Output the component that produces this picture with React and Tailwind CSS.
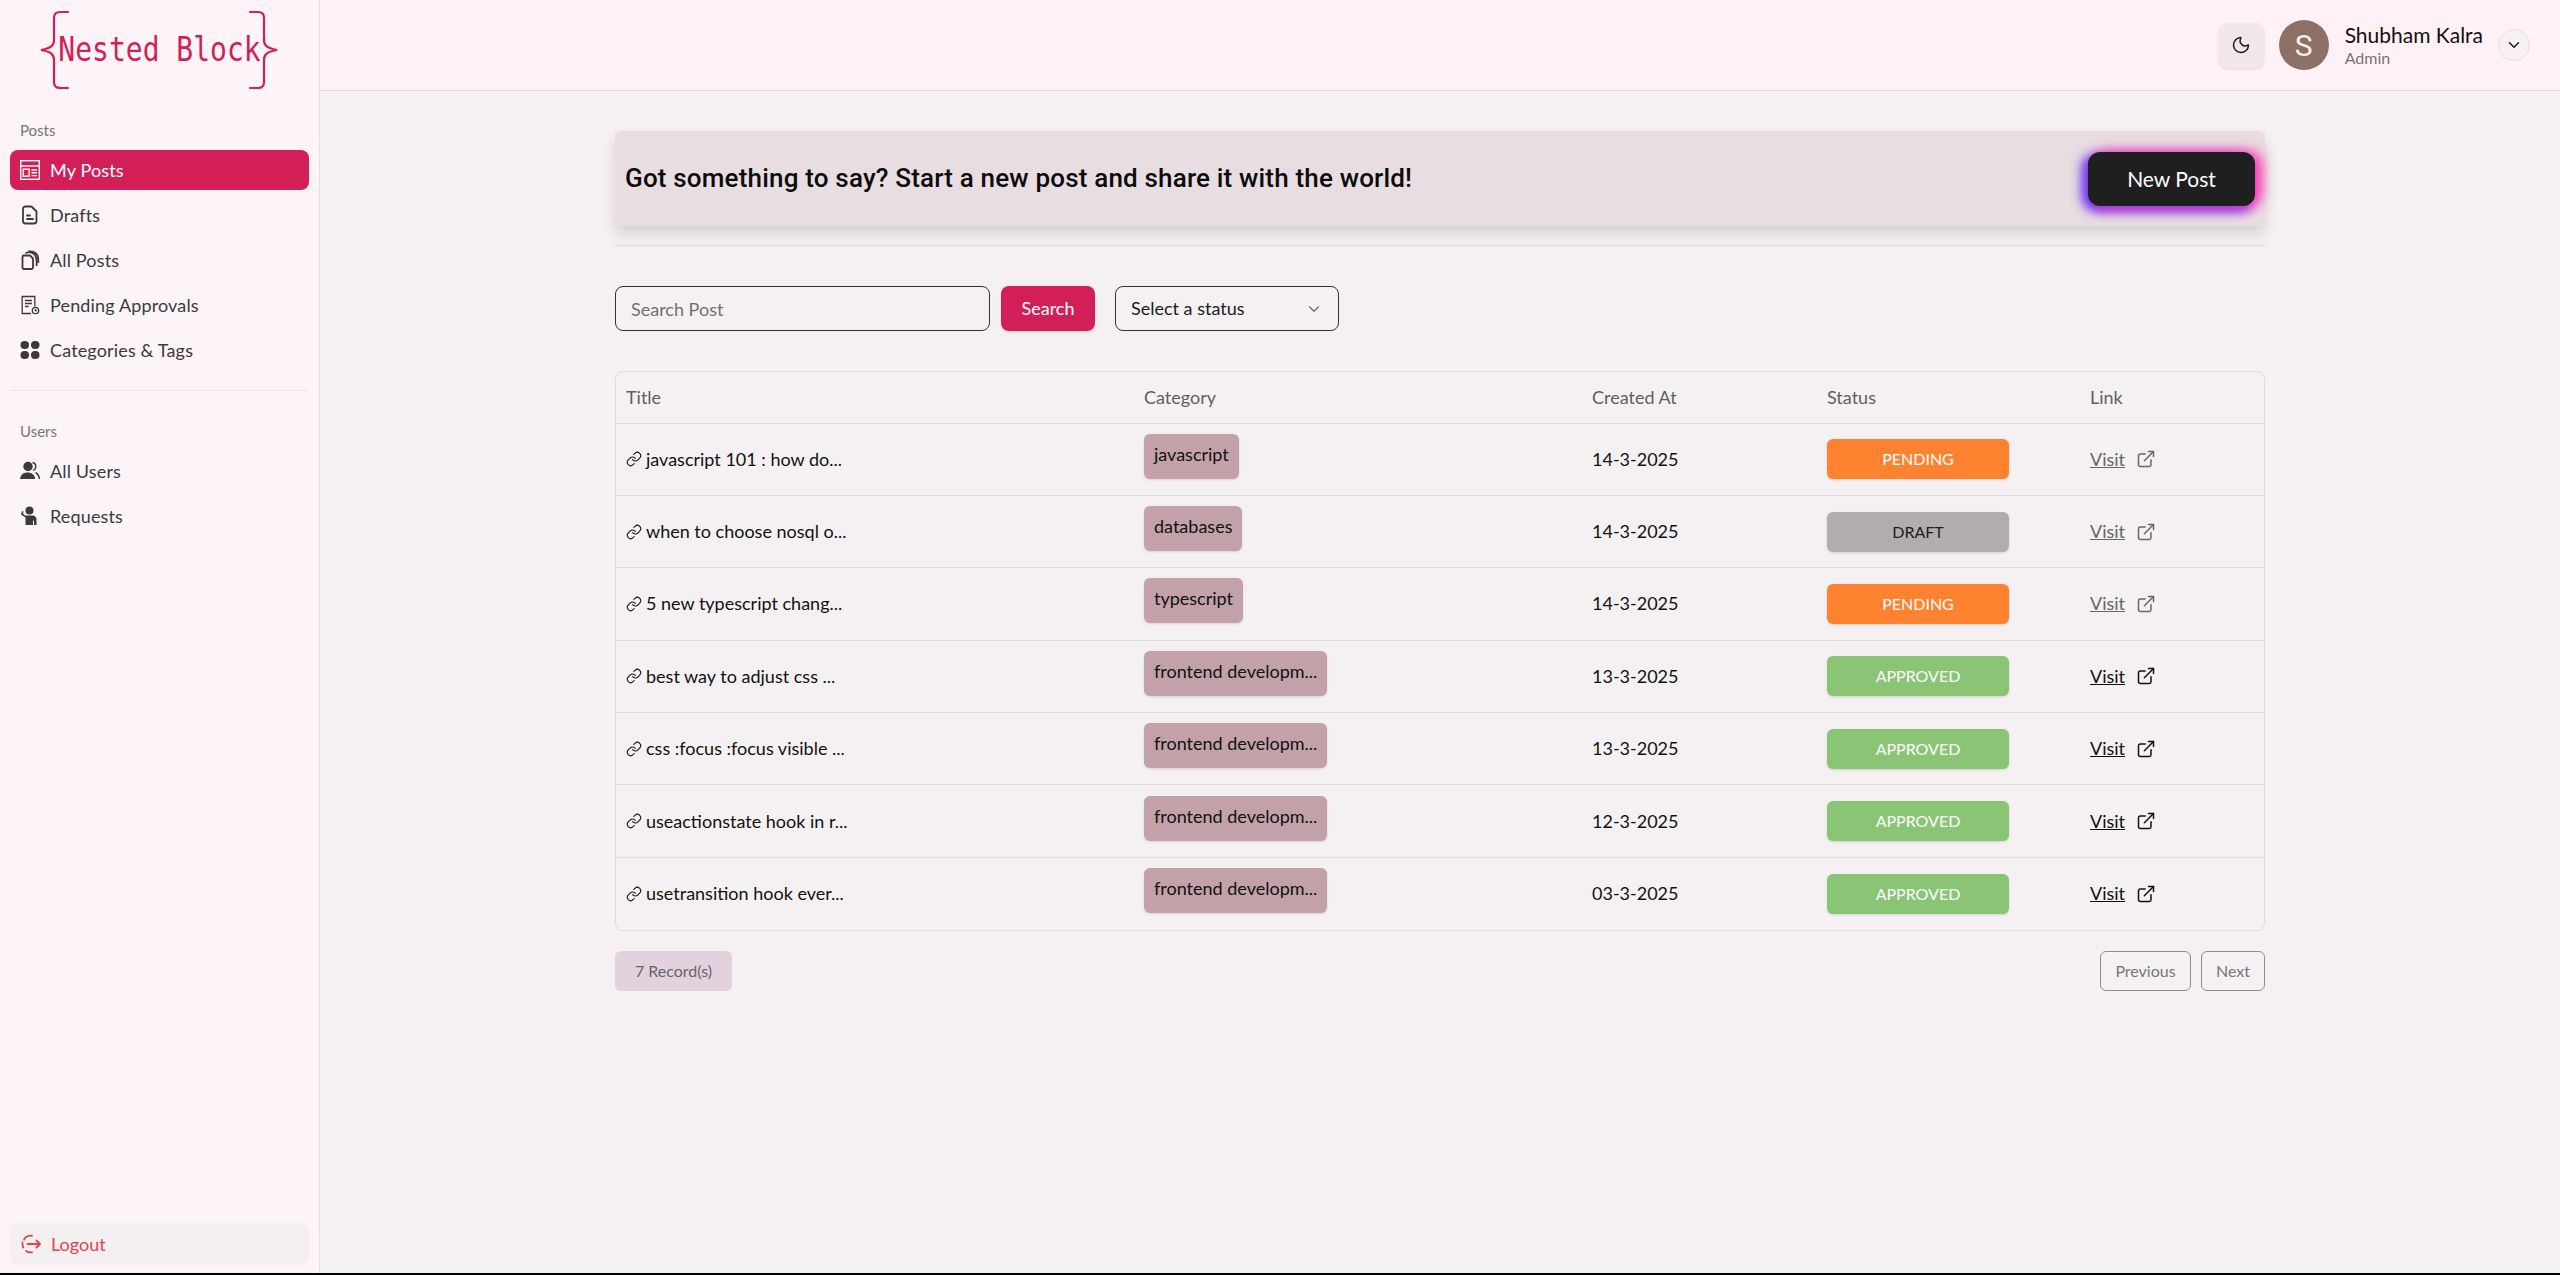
import React from "react";
import { Moon, ChevronDown, Link as LinkIcon, ExternalLink } from "lucide-react";

const posts = [
  { title: "javascript 101 : how do...", category: "javascript", date: "14-3-2025", status: "PENDING" },
  { title: "when to choose nosql o...", category: "databases", date: "14-3-2025", status: "DRAFT" },
  { title: "5 new typescript chang...", category: "typescript", date: "14-3-2025", status: "PENDING" },
  { title: "best way to adjust css ...", category: "frontend developm...", date: "13-3-2025", status: "APPROVED" },
  { title: "css :focus :focus visible ...", category: "frontend developm...", date: "13-3-2025", status: "APPROVED" },
  { title: "useactionstate hook in r...", category: "frontend developm...", date: "12-3-2025", status: "APPROVED" },
  { title: "usetransition hook ever...", category: "frontend developm...", date: "03-3-2025", status: "APPROVED" },
];

const statusStyles = {
  PENDING: "bg-[#fd8330] text-white",
  DRAFT: "bg-[#b1adae] text-[#1c1c1c]",
  APPROVED: "bg-[#8ac576] text-white",
};

const MyPostsIcon = () => (
  <svg width="20" height="20" viewBox="0 0 20 20" fill="none" stroke="currentColor" strokeWidth="1.4">
    <rect x="0.7" y="0.7" width="18.6" height="18.6" />
    <path d="M1 6h18" />
    <rect x="3.2" y="9.2" width="6" height="7" />
    <path d="M11.5 10h5.5M11.5 12.8h5.5M11.5 15.6h5.5" />
  </svg>
);

const DraftIcon = () => (
  <svg width="20" height="20" viewBox="0 0 20 20" fill="none" stroke="currentColor" strokeWidth="1.8" strokeLinejoin="round" strokeLinecap="round">
    <path d="M5.5 1.5h6l5 5v9.5a2.5 2.5 0 0 1-2.500 2.500h-8.500a2.500 2.500 0 0 1-2.500-2.500v-12a2.500 2.500 0 0 1 2.500-2.500z" />
    <path d="M7 10.500h3M7 14h6" />
  </svg>
);

const AllPostsIcon = () => (
  <svg width="20" height="20" viewBox="0 0 20 20" fill="none" stroke="currentColor" strokeWidth="1.8" strokeLinejoin="round">
    <path d="M4 5.500h6l3 3v9a1.500 1.500 0 0 1-1.500 1.500h-7.500a1.500 1.500 0 0 1-1.500-1.500v-10.500a1.500 1.500 0 0 1 1.500-1.500z" />
    <path d="M5.500 3.200c3-1.500 7-1.200 9.500 1.800 1.500 2 2 5 1.500 11" />
    <path d="M8.500 1.500c3.500-.6 6.500.5 8.500 3 1.300 2 1.500 5 1.200 8.500" />
  </svg>
);

const PendingIcon = () => (
  <svg width="20" height="20" viewBox="0 0 20 20" fill="none" stroke="currentColor" strokeWidth="1.3">
    <path d="M11 18.500h-8.800v-17h12.600v10" />
    <path d="M5 5.500h7M5 8.500h7M5 11.500h3.500" />
    <circle cx="15.500" cy="15.500" r="3.200" />
    <path d="M15.500 14v1.700h1.500" />
  </svg>
);

const CategoriesIcon = () => (
  <svg width="20" height="20" viewBox="0 0 20 20" fill="currentColor">
    <rect x="0.500" y="1" width="8.500" height="8" rx="4" />
    <rect x="11" y="1" width="8.500" height="8" rx="4" />
    <rect x="0.500" y="11" width="8.500" height="8" rx="4" />
    <rect x="11" y="11" width="8.500" height="8" rx="4" />
  </svg>
);

const AllUsersIcon = () => (
  <svg width="20" height="20" viewBox="0 0 20 20" fill="currentColor">
    <circle cx="8" cy="5.500" r="4.700" />
    <path d="M0 18c.6-4.500 3.500-6.500 7.500-6.500s7 2 7.800 6.500z" />
    <path d="M12.500 1.500c2.200.5 3.300 2.100 3.300 4 0 1.800-1 3.300-2.800 3.900" fill="none" stroke="currentColor" strokeWidth="1.400" />
    <path d="M15.500 11.500c2 1 3.500 3.200 4 6.500" fill="none" stroke="currentColor" strokeWidth="1.400" />
  </svg>
);

const RequestsIcon = () => (
  <svg width="20" height="20" viewBox="0 0 20 20" fill="currentColor">
    <circle cx="9.500" cy="4.500" r="4" />
    <path d="M5 9.500h7.500c2.500 0 4 1.800 4 4v5.500h-2.500v-4.500h-1v4.500h-7.500v-7.500l-4.500-3 1-3.500 1.500.500-.5 2z" />
  </svg>
);

const LogoutIcon = () => (
  <svg width="20" height="20" viewBox="0 0 20 20" fill="none" stroke="currentColor" strokeWidth="1.800" strokeLinecap="round" strokeLinejoin="round">
    <path d="M11 1.800a8.300 8.300 0 0 0-8 3.700" />
    <path d="M1.500 8.500a8.300 8.300 0 0 0 .800 5" />
    <path d="M5 17a8.300 8.300 0 0 0 6 1.300" />
    <path d="M6.500 10h12.500M15.500 6.500l3.500 3.500-3.500 3.500" />
  </svg>
);

const Logo = () => (
  <div className="relative flex h-[100px] items-center justify-center">
    <svg className="absolute left-[40px] top-[10px]" width="240" height="80" viewBox="0 0 240 80" fill="none" stroke="#d31f58" strokeWidth="2.200" strokeLinecap="round">
      <path d="M28 2h-8c-4 0-6 2-6 6v22c0 5-2 8-13 10 11 2 13 5 13 10v22c0 4 2 6 6 6h8" />
      <path d="M210 2h8c4 0 6 2 6 6v22c0 5 2 8 13 10-11 2-13 5-13 10v22c0 4-2 6-6 6h-8" />
    </svg>
    <span className="scale-y-[1.2] font-['DejaVu_Sans_Mono',monospace] text-[28px] leading-none text-[#d31f58]">
      Nested Block
    </span>
  </div>
);

const NavItem = ({ icon, label, active }) => (
  <a
    className={`flex h-[40px] items-center gap-[10px] rounded-lg px-[10px] text-[18px] tracking-[0.15px] ${
      active ? "bg-[#d31f58] text-white" : "text-[#3a3a3e]"
    }`}
  >
    {icon}
    <span>{label}</span>
  </a>
);

const Sidebar = () => (
  <aside className="flex w-[320px] shrink-0 flex-col border-r border-[#e4e0e2] bg-[#fcf4f7] pl-[10px] pr-[10px] pb-[8px]">
    <div className="-mx-[10px]">
      <Logo />
    </div>
    <p className="mt-[20px] px-[10px] text-[15px] leading-[20px] text-[#77767a]">Posts</p>
    <nav className="mt-[10px] flex flex-col gap-[5px]">
      <NavItem icon={<MyPostsIcon />} label="My Posts" active />
      <NavItem icon={<DraftIcon />} label="Drafts" />
      <NavItem icon={<AllPostsIcon />} label="All Posts" />
      <NavItem icon={<PendingIcon />} label="Pending Approvals" />
      <NavItem icon={<CategoriesIcon />} label="Categories & Tags" />
    </nav>
    <div className="mt-[20px] border-t border-[#ebe5e8]" />
    <p className="mt-[30px] px-[10px] text-[15px] leading-[20px] text-[#77767a]">Users</p>
    <nav className="mt-[10px] flex flex-col gap-[5px]">
      <NavItem icon={<AllUsersIcon />} label="All Users" />
      <NavItem icon={<RequestsIcon />} label="Requests" />
    </nav>
    <button className="mt-auto flex h-[42px] items-center gap-[10px] rounded-lg border border-[#f5eff2] bg-[#f4f0f2] px-[10px] text-[18px] text-[#e2444f]">
      <LogoutIcon />
      Logout
    </button>
  </aside>
);

const Header = () => (
  <header className="flex h-[91px] shrink-0 items-center justify-end border-b border-[#dcd9db] bg-[#fff2f6] pr-[30px]">
    <button className="flex h-[45px] w-[45px] items-center justify-center rounded-lg bg-[#f2e7eb] text-[#1c1c1c] shadow-sm">
      <Moon size={20} strokeWidth={1.8} />
    </button>
    <div className="ml-[15px] flex h-[50px] w-[50px] items-center justify-center rounded-full bg-[#8c6f65] font-['Roboto',sans-serif] text-[30px] text-[#fbefe9]">
      S
    </div>
    <div className="ml-[16px] flex flex-col">
      <span className="text-[21px] leading-[26px] text-[#111]">Shubham Kalra</span>
      <span className="text-[16px] leading-[20px] text-[#77767a]">Admin</span>
    </div>
    <button className="ml-[15px] flex h-[32px] w-[32px] items-center justify-center rounded-full border border-[#e4dfe1] bg-[#f8f1f4] text-[#1c1c1c]">
      <ChevronDown size={18} strokeWidth={2} />
    </button>
  </header>
);

const Banner = () => (
  <div className="flex h-[95px] items-center justify-between rounded-md bg-[#e8dde1] pl-[10px] pr-[10px] shadow-[0_8px_14px_rgba(60,40,50,0.16)]">
    <h2 className="font-['Roboto',sans-serif] text-[26px] font-medium tracking-[0.18px] text-[#0c0c0c]">
      Got something to say? Start a new post and share it with the world!
    </h2>
    <button className="h-[54px] w-[167px] rounded-xl bg-[#1f1f1f] text-[21px] text-white shadow-[7px_-1px_13px_#ff3fb0,-6px_3px_12px_#5a35f5,0_6px_11px_#c04fe0]">
      New Post
    </button>
  </div>
);

const SearchRow = () => (
  <div className="mt-[40px] flex items-center">
    <input
      placeholder="Search Post"
      className="h-[45px] w-[375px] rounded-lg border border-[#333] bg-transparent px-[15px] text-[18px] outline-none placeholder:text-[#6f6f72]"
    />
    <button className="ml-[11px] h-[45px] w-[94px] rounded-lg bg-[#d31f58] text-[18px] text-white shadow-sm">
      Search
    </button>
    <button className="ml-[20px] flex h-[45px] w-[224px] items-center justify-between rounded-lg border border-[#333] pl-[15px] pr-[15px] text-[18px] text-[#1c1c1c]">
      Select a status
      <ChevronDown size={18} strokeWidth={1.5} className="text-[#66666a]" />
    </button>
  </div>
);

const PostsTable = () => (
  <div className="mt-[40px] rounded-lg border border-[#e0dcde]">
    <table className="w-full table-fixed border-collapse text-left">
      <colgroup>
        <col className="w-[518px]" />
        <col className="w-[448px]" />
        <col className="w-[235px]" />
        <col className="w-[263px]" />
        <col />
      </colgroup>
      <thead>
        <tr className="h-[51px] text-[18px] text-[#5f5e62]">
          <th className="pl-[10px] font-normal">Title</th>
          <th className="pl-[10px] font-normal">Category</th>
          <th className="pl-[10px] font-normal">Created At</th>
          <th className="pl-[10px] font-normal">Status</th>
          <th className="pl-[10px] font-normal">Link</th>
        </tr>
      </thead>
      <tbody>
        {posts.map((post) => {
          const visited = post.status === "APPROVED";
          return (
            <tr key={post.title} className="h-[72.400px] border-t border-[#dfdbdd] text-[18px] text-[#111]">
              <td className="pl-[10px]">
                <span className="flex items-center gap-[4px]">
                  <LinkIcon size={16} strokeWidth={1.600} />
                  {post.title}
                </span>
              </td>
              <td className="pl-[10px]">
                <span className="mb-[6px] inline-block h-[45px] rounded-md bg-[#c3a1a9] px-[10px] text-[18px] leading-[41px] shadow-sm">
                  {post.category}
                </span>
              </td>
              <td className="pl-[10px]">{post.date}</td>
              <td className="pl-[10px]">
                <span className={`flex h-[40px] w-[182px] items-center justify-center rounded-md text-[16px] shadow-sm ${statusStyles[post.status]}`}>
                  {post.status}
                </span>
              </td>
              <td className="pl-[10px]">
                <a className={`flex items-center gap-[11px] ${visited ? "text-[#111]" : "text-[#66656a]"}`}>
                  <span className="underline">Visit</span>
                  <ExternalLink size={20} strokeWidth={1.800} />
                </a>
              </td>
            </tr>
          );
        })}
      </tbody>
    </table>
  </div>
);

const Footer = () => (
  <div className="mt-[20px] flex items-center justify-between">
    <div className="flex h-[40px] w-[117px] items-center justify-center rounded-md bg-[#e2d2de] text-[16px] text-[#66656a]">
      7 Record(s)
    </div>
    <div className="flex gap-[10px]">
      <button className="h-[40px] w-[91px] rounded-md border border-[#908d8f] text-[16px] text-[#77767a]">
        Previous
      </button>
      <button className="h-[40px] w-[64px] rounded-md border border-[#908d8f] text-[16px] text-[#77767a]">
        Next
      </button>
    </div>
  </div>
);

const App = () => (
  <div className="flex h-[1275px] flex-col bg-black font-['Lato',sans-serif]">
    <div className="flex min-h-0 flex-1 mb-[2px]">
      <Sidebar />
      <div className="flex min-w-0 flex-1 flex-col bg-[#f5f1f3]">
        <Header />
        <main className="px-[295px] pt-[40px]">
          <Banner />
          <div className="mt-[19px] border-t border-[#dedadc]" />
          <SearchRow />
          <PostsTable />
          <Footer />
        </main>
      </div>
    </div>
  </div>
);

export default App;
